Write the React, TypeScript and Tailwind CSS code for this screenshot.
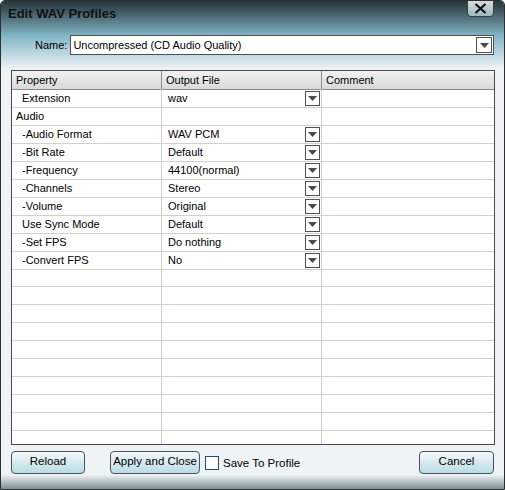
import React from "react";

type Row = { prop: string; value?: string; drop?: boolean; indent?: boolean };

const rows: Row[] = [
  { prop: "Extension", value: "wav", drop: true, indent: true },
  { prop: "Audio" },
  { prop: "-Audio Format", value: "WAV PCM", drop: true, indent: true },
  { prop: "-Bit Rate", value: "Default", drop: true, indent: true },
  { prop: "-Frequency", value: "44100(normal)", drop: true, indent: true },
  { prop: "-Channels", value: "Stereo", drop: true, indent: true },
  { prop: "-Volume", value: "Original", drop: true, indent: true },
  { prop: "Use Sync Mode", value: "Default", drop: true, indent: true },
  { prop: "-Set FPS", value: "Do nothing", drop: true, indent: true },
  { prop: "-Convert FPS", value: "No", drop: true, indent: true },
];

function Arrow({ big }: { big?: boolean }) {
  return (
    <div className={"flex items-center justify-center border border-[#505050] bg-white " + (big ? "h-[16px] w-[16px]" : "h-[15px] w-[15px]")}>
      <svg width="9" height="5" viewBox="0 0 9 5">
        <path d="M0 0h9L4.5 5z" fill="#4a4a4a" />
      </svg>
    </div>
  );
}

function Btn({ label, w }: { label: string; w: string }) {
  return (
    <button className={"h-[23px] rounded-[4px] border border-[#4d5558] bg-gradient-to-b from-[#f4f9fb] to-[#b9dbe6] pb-px text-[11.5px] text-black " + w}>
      {label}
    </button>
  );
}

export default function App() {
  const empty = Array.from({ length: 11 });
  return (
    <div
      className="relative flex h-[490px] w-[505px] flex-col overflow-hidden rounded-t-[5px] border border-[#2e2e2e] bg-[#eef3f6] text-[11px] text-black"
      style={{ fontFamily: '"Liberation Sans", Tahoma, Arial, sans-serif' }}
    >
      {/* title + name */}
      <div className="h-[68px] bg-gradient-to-b from-[#28353b] via-[#7fb4c5] to-[#eef3f6]">
        <div className="flex h-[27px] items-start justify-between pl-[7px] pr-[10px]">
          <div className="pt-[3px] text-[13px] font-bold text-[#111]">Edit WAV Profiles</div>
          <div className="-mt-px flex h-[17px] w-[27px] items-center justify-center rounded-b-[4px] border border-[#3a3a3a] bg-gradient-to-b from-[#d6dcdf] to-[#9fb7c0]">
            <svg width="13" height="11" viewBox="0 0 13 11">
              <path d="M1.5 1l10 9M11.5 1l-10 9" stroke="#111" strokeWidth="2.2" />
            </svg>
          </div>
        </div>
        <div className="mt-[7px] flex items-center pl-[34px] pr-[10px]">
          <span className="mr-[3px]">Name:</span>
          <div className="flex h-[20px] flex-1 items-center justify-between border border-[#505050] bg-white pl-[2px] pr-[1px]">
            <span>Uncompressed (CD Audio Quality)</span>
            <Arrow big />
          </div>
        </div>
      </div>

      {/* table */}
      <div className="ml-[10px] mt-[1px] h-[375px] w-[484px] overflow-hidden border border-[#4a4a4a] bg-white">
        <div className="grid h-[18px] grid-cols-[150px_160px_1fr] bg-gradient-to-b from-[#f2f2f2] to-[#d9d9d9]">
          <div className="border-r border-b border-[#8a8a8a] pl-[4px] leading-[18px]">Property</div>
          <div className="border-r border-b border-[#8a8a8a] pl-[4px] leading-[18px]">Output File</div>
          <div className="border-b border-[#8a8a8a] pl-[4px] leading-[18px]">Comment</div>
        </div>
        {rows.map((r) => (
          <div key={r.prop} className="grid h-[18px] grid-cols-[150px_160px_1fr]">
            <div className={"border-r border-b border-[#d4d0c8] leading-[18px] " + (r.indent ? "pl-[10px]" : "pl-[4px]")}>{r.prop}</div>
            <div className="flex items-center justify-between border-r border-b border-[#d4d0c8] pl-[6px] pr-[1px]">
              <span className="pt-px">{r.value}</span>
              {r.drop && <Arrow />}
            </div>
            <div className="border-b border-[#d4d0c8]" />
          </div>
        ))}
        {empty.map((_, i) => (
          <div key={i} className="grid h-[18px] grid-cols-[150px_160px_1fr]">
            <div className="border-r border-b border-[#d4d0c8]" />
            <div className="border-r border-b border-[#d4d0c8]" />
            <div className="border-b border-[#d4d0c8]" />
          </div>
        ))}
      </div>

      {/* buttons */}
      <div className="mt-[6px] flex items-center pl-[10px] pr-[10px]">
        <Btn label="Reload" w="w-[74px]" />
        <div className="ml-[25px]">
          <Btn label="Apply and Close" w="w-[90px]" />
        </div>
        <div className="ml-[5px] h-[14px] w-[14px] border border-[#1f4e7a] bg-white" />
        <span className="ml-[4px] mt-[2px] text-[11.5px]">Save To Profile</span>
        <div className="ml-auto">
          <Btn label="Cancel" w="w-[75px]" />
        </div>
      </div>

      <div className="mt-auto h-[14px] bg-gradient-to-b from-[#eef3f6] to-[#7d8f96]" />
    </div>
  );
}
